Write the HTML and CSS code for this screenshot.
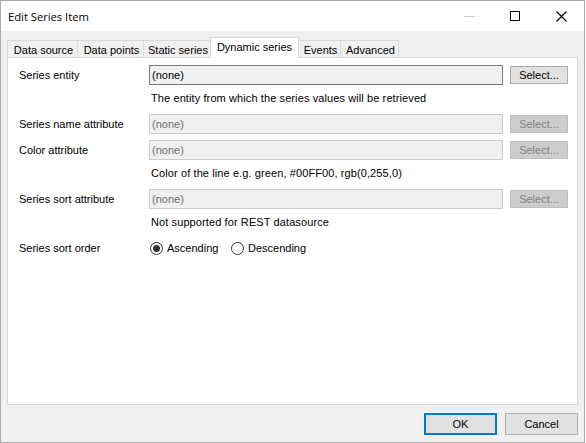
FILE: index.html
```html
<!DOCTYPE html>
<html>
<head>
<meta charset="utf-8">
<link rel="stylesheet" href="styles.css">
</head>
<body>
<div class="window">
  <div class="titlebar">
    <span class="title">Edit Series Item</span>
    <div class="controls">
      <span class="ctl ctl-min"><svg width="11" height="1" viewBox="0 0 11 1"><rect width="11" height="1" fill="#cccccc"/></svg></span>
      <span class="ctl ctl-max"><svg width="10" height="10" viewBox="0 0 10 10"><rect x="0.5" y="0.5" width="9" height="9" fill="none" stroke="#000" stroke-width="1"/></svg></span>
      <span class="ctl ctl-close"><svg width="11" height="11" viewBox="0 0 11 11"><path d="M0.5 0.5 L10.5 10.5 M10.5 0.5 L0.5 10.5" stroke="#000" stroke-width="1.1" fill="none"/></svg></span>
    </div>
  </div>
  <div class="body">
    <div class="tabs">
      <div class="tab t1">Data source</div>
      <div class="tab t2">Data points</div>
      <div class="tab t3">Static series</div>
      <div class="tab t4 active">Dynamic series</div>
      <div class="tab t5">Events</div>
      <div class="tab t6">Advanced</div>
    </div>
    <div class="panel">
      <div class="row">
        <span class="label">Series entity</span>
        <div class="input">(none)</div>
        <div class="btn">Select...</div>
      </div>
      <div class="hint">The entity from which the series values will be retrieved</div>
      <div class="row gap9">
        <span class="label">Series name attribute</span>
        <div class="input disabled">(none)</div>
        <div class="btn disabled">Select...</div>
      </div>
      <div class="row">
        <span class="label">Color attribute</span>
        <div class="input disabled">(none)</div>
        <div class="btn disabled">Select...</div>
      </div>
      <div class="hint">Color of the line e.g. green, #00FF00, rgb(0,255,0)</div>
      <div class="row gap9">
        <span class="label">Series sort attribute</span>
        <div class="input disabled">(none)</div>
        <div class="btn disabled">Select...</div>
      </div>
      <div class="hint">Not supported for REST datasource</div>
      <div class="row gap9">
        <span class="label">Series sort order</span>
        <div class="radios">
          <span class="radio checked"></span><span class="rlabel r1">Ascending</span>
          <span class="radio"></span><span class="rlabel">Descending</span>
        </div>
      </div>
    </div>
    <div class="footer">
      <div class="fbtn ok">OK</div>
      <div class="fbtn">Cancel</div>
    </div>
  </div>
</div>
</body>
</html>
```

FILE: styles.css
```css
html, body {
  margin: 0;
  padding: 0;
  background: #ffffff;
}
.window {
  box-sizing: border-box;
  width: 585px;
  height: 443px;
  border: 1px solid #aaaaaa;
  background: #f0f0f0;
  display: flex;
  flex-direction: column;
  font-family: "Liberation Sans", Arial, sans-serif;
  font-size: 11px;
  color: #000;
}
.titlebar {
  height: 30px;
  background: #ffffff;
  display: flex;
  align-items: center;
  justify-content: space-between;
}
.title {
  font-family: "Open Sans", "Noto Sans", sans-serif;
  font-size: 11.2px;
  padding-left: 7px;
  margin-top: 1px;
}
.controls {
  display: flex;
  height: 30px;
}
.ctl {
  width: 46px;
  height: 30px;
  display: flex;
  align-items: center;
  justify-content: center;
}
.ctl svg { display: block; }
.body {
  flex: 1;
  display: flex;
  flex-direction: column;
  padding: 6px 6px 7px 6px;
}
.tabs {
  display: flex;
  height: 20px;
  align-items: flex-end;
  position: relative;
  z-index: 1;
}
.tab {
  box-sizing: border-box;
  height: 17px;
  border-top: 1px solid #d9d9d9;
  border-right: 1px solid #d9d9d9;
  background: #f0f0f0;
  display: flex;
  align-items: center;
  justify-content: center;
  padding-top: 1px;
  padding-left: 2px;
}
.t1 { width: 71px; border-left: 1px solid #d9d9d9; }
.t2 { width: 66px; }
.t3 { width: 66px; border-right: none; }
.t4 { width: 89px; padding-left: 0; }
.t5 { width: 42px; border-left: none; }
.t6 { width: 58px; }
.tab.active {
  height: 21px;
  margin-bottom: -1px;
  background: #ffffff;
  border-left: 1px solid #d9d9d9;
  border-right: 1px solid #d9d9d9;
  align-items: flex-start;
  padding-top: 3px;
}
.panel {
  box-sizing: border-box;
  flex: 1;
  background: #ffffff;
  border: 1px solid #d9d9d9;
  padding: 7px 0 0 11px;
  display: flex;
  flex-direction: column;
}
.row {
  display: grid;
  grid-template-columns: 130px 354px 65px;
  height: 20px;
  align-items: center;
  margin-top: 6px;
}
.row:first-child { margin-top: 0; }
.row.gap9 { margin-top: 9px; }
.label { line-height: 13px; }
.input {
  box-sizing: border-box;
  height: 20px;
  border: 1px solid #7a7a7a;
  background: #f0f0f0;
  padding: 0 2px;
  line-height: 18px;
}
.input.disabled {
  border-color: #cccccc;
  color: #6d6d6d;
}
.btn {
  box-sizing: border-box;
  height: 18px;
  margin-left: 7px;
  width: 58px;
  border: 1px solid #adadad;
  background: #e1e1e1;
  text-align: center;
  line-height: 16px;
}
.btn.disabled {
  background: #cccccc;
  border-color: #bfbfbf;
  color: #838383;
}
.hint {
  margin-top: 6px;
  margin-left: 132px;
  height: 14px;
  line-height: 14px;
  letter-spacing: 0.1px;
}
.radios {
  display: flex;
  align-items: center;
  padding-left: 1px;
}
.radio {
  box-sizing: border-box;
  width: 13px;
  height: 13px;
  border: 1px solid #333333;
  border-radius: 50%;
  background: #ffffff;
  display: flex;
  align-items: center;
  justify-content: center;
}
.radio.checked::after {
  content: "";
  width: 7px;
  height: 7px;
  border-radius: 50%;
  background: #333333;
}
.rlabel { margin-left: 4px; }
.r1 { width: 64px; }
.footer {
  display: flex;
  justify-content: flex-end;
  gap: 8px;
  margin-top: 8px;
}
.fbtn {
  box-sizing: border-box;
  width: 73px;
  height: 22px;
  border: 1px solid #adadad;
  background: #e1e1e1;
  display: flex;
  align-items: center;
  justify-content: center;
}
.fbtn.ok {
  border: 2px solid #0078d7;
}
```
